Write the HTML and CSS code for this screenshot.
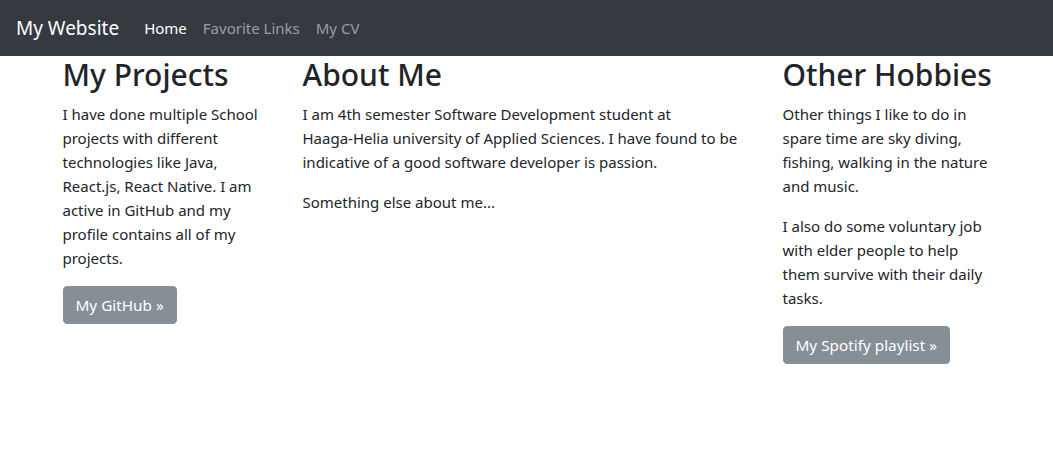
FILE: index.html
```html
<!DOCTYPE html>
<html lang="en">
<head>
<meta charset="utf-8">
<title>My Website</title>
<link rel="stylesheet" href="styles.css">
</head>
<body>
<nav class="navbar">
  <a class="brand" href="#">My Website</a>
  <ul class="nav">
    <li><a class="nav-link active" href="#">Home</a></li>
    <li><a class="nav-link" href="#">Favorite Links</a></li>
    <li><a class="nav-link" href="#">My CV</a></li>
  </ul>
</nav>
<main class="container">
  <div class="row">
    <section class="col col-3">
      <h2>My Projects</h2>
      <p>I have done multiple School projects with different technologies like Java, React.js, React Native. I am active in GitHub and my profile contains all of my projects.</p>
      <p><a class="btn" href="#">My GitHub »</a></p>
    </section>
    <section class="col col-6">
      <h2>About Me</h2>
      <p>I am 4th semester Software Development student at <span class="nowrap">Haaga-Helia</span> university of Applied Sciences. I have found to be indicative of a good software developer is passion.</p>
      <p>Something else about me...</p>
    </section>
    <section class="col col-3">
      <h2>Other Hobbies</h2>
      <p>Other things I like to do in spare time are sky diving, fishing, walking in the nature and music.</p>
      <p>I also do some voluntary job with elder people to help them survive with their daily tasks.</p>
      <p><a class="btn" href="#">My Spotify playlist »</a></p>
    </section>
  </div>
</main>
</body>
</html>
```
FILE: styles.css
```css
* { box-sizing: border-box; }
body {
  margin: 0;
  font-family: "Noto Sans", "Open Sans", sans-serif;
  font-size: 15px;
  line-height: 24px;
  color: #212529;
  background: #fff;
}
a { text-decoration: none; }
.nowrap { white-space: nowrap; }
.navbar {
  display: flex;
  align-items: center;
  height: 56px;
  padding: 0 16px;
  background: #343a40;
}
.brand {
  color: #fff;
  font-size: 19px;
  margin-right: 17px;
  line-height: 30px;
}
.nav {
  display: flex;
  list-style: none;
  margin: 0;
  padding: 0;
}
.nav-link {
  display: block;
  padding: 8px 8px;
  color: rgba(255,255,255,.5);
  font-size: 15px;
}
.nav-link.active { color: #fff; }
.container {
  width: 960px;
  margin: 0 auto;
  padding: 0 15px;
}
.row {
  display: flex;
  margin: 0 -15px;
}
.col { padding: 0 14px 0 16px; }
.col-3 { width: 240px; }
.col-6 { width: 480px; }
h2 {
  margin: 0 0 8px;
  font-size: 30px;
  font-weight: 500;
  line-height: 38px;
}
p { margin: 0 0 16px; }
.btn {
  display: inline-block;
  padding: 6px 12px;
  font-size: 15.3px;
  line-height: 24px;
  color: #fff;
  background: #868e96;
  border: 1px solid #868e96;
  border-radius: 4px;
}
```
